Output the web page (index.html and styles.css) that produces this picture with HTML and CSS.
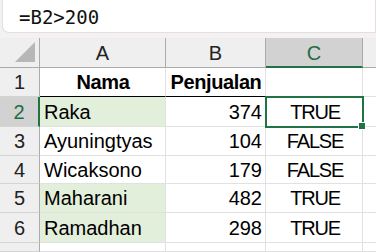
FILE: index.html
```html
<!doctype html>
<html lang="id">
<head>
	<meta charset="utf-8">
	<title>Penjualan</title>
	<link rel="stylesheet" href="styles.css">
</head>
<body>
<div class="fbar"><span class="formula">=B2&gt;200</span></div>

<div class="sheet">
	<!-- kepala kolom -->
	<div class="corner"><i></i></div>
	<div class="colhead">A</div>
	<div class="colhead">B</div>
	<div class="colhead sel">C</div>
	<div class="colhead last"></div>

	<div class="rowhead">1</div>
	<div class="cell th">Nama</div>
	<div class="cell th">Penjualan</div>
	<div class="cell"></div>
	<div class="cell last"></div>

	<div class="rowhead sel">2</div>
	<div class="cell hl">Raka</div>
	<div class="cell num">374</div>
	<div class="cell mid active">TRUE</div>
	<div class="cell last"></div>

	<div class="rowhead">3</div>
	<div class="cell">Ayuningtyas</div>
	<div class="cell num">104</div>
	<div class="cell mid">FALSE</div>
	<div class="cell last"></div>

	<div class="rowhead">4</div>
	<div class="cell">Wicaksono</div>
	<div class="cell num">179</div>
	<div class="cell mid">FALSE</div>
	<div class="cell last"></div>

	<div class="rowhead">5</div>
	<div class="cell hl">Maharani</div>
	<div class="cell num">482</div>
	<div class="cell mid">TRUE</div>
	<div class="cell last"></div>

	<div class="rowhead">6</div>
	<div class="cell hl">Ramadhan</div>
	<div class="cell num">298</div>
	<div class="cell mid">TRUE</div>
	<div class="cell last"></div>

	<div class="rowhead"></div>
	<div class="cell"></div>
	<div class="cell"></div>
	<div class="cell"></div>
	<div class="cell last"></div>
</div>
</body>
</html>
```

FILE: styles.css
```css
*{ padding: 0; margin: 0; box-sizing: border-box }
body{ width: 376px; height: 252px; overflow: hidden; background: #f4f1f2; font-family: "Liberation Sans", "Lato", sans-serif; color: #000 }

/* formula bar */
.fbar{ height: 34px; margin: -1px 0 0 2px; background: #fff; border: 1px solid #e3dfe1; border-top: none; border-radius: 0 0 0 7px; padding-left: 16px; display: flex; align-items: center }
.formula{ font-family: "DejaVu Sans Mono", "Liberation Mono", monospace; font-size: 19px; color: #111; padding-top: 2px }

.sheet{ margin-top: 5px; display: grid; grid-template-columns: 40px 126px 100px 97px 13px; grid-template-rows: 30px 29px 30px 29px 28px 29px 30px 9px; background: #fff; font-size: 20px }

.corner{ background: #efefef; border-right: 1px solid #ababab; border-bottom: 1px solid #ababab; position: relative }
.corner i{ position: absolute; right: 4px; bottom: 5px; width: 0; height: 0; border-left: 20px solid transparent; border-bottom: 20px solid #b7b7b7 }

.colhead{ background: #efefef; border-right: 1px solid #ababab; border-bottom: 1px solid #ababab; display: flex; align-items: center; justify-content: center; color: #222; padding-top: 1px }
.colhead.sel{ background: #d2d2d2; color: #1e6e42; border-bottom: 2px solid #217346; padding-top: 2px }
.colhead.last{ border-right: none }

.rowhead{ background: #efefef; border-right: 1px solid #ababab; border-bottom: 1px solid #d4d4d4; display: flex; align-items: center; justify-content: center; color: #222; padding-top: 1px }
.rowhead.sel{ background: #d2d2d2; color: #1e6e42; border-right: 2px solid #217346 }

.cell{ border-right: 1px solid #e1e1e1; border-bottom: 1px solid #e1e1e1; display: flex; align-items: center; padding: 1px 3px 0 4px; white-space: nowrap; overflow: visible }
.cell.last{ border-right: none }
.cell.th{ font-weight: bold; justify-content: center; border-bottom-color: #000; letter-spacing: -0.4px }
.cell.num{ justify-content: flex-end }
.cell.mid{ justify-content: center; letter-spacing: -1.2px; padding-left: 5px }
.cell.hl{ background: #e2efda }

/* sel aktif C2 */
.cell.active{ position: relative; outline: 2px solid #217346; outline-offset: -1px }
.cell.active:after{ content: ""; position: absolute; right: -4px; bottom: -4px; width: 6px; height: 6px; background: #217346; border: 1px solid #fff }
```
